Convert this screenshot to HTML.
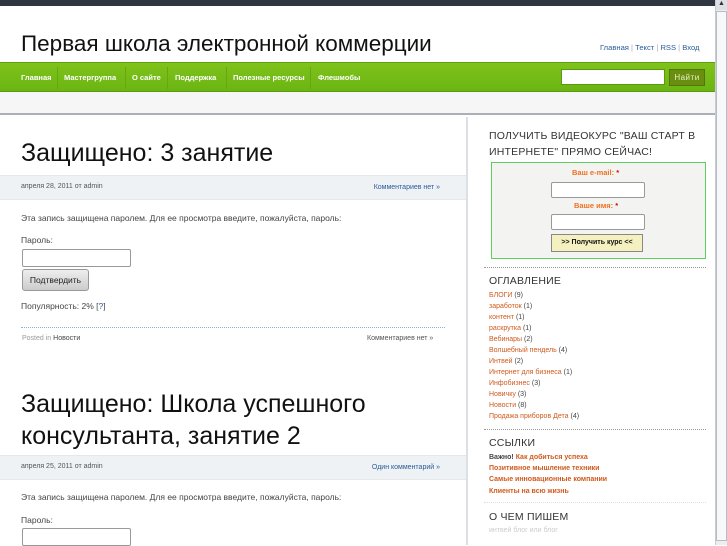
<!DOCTYPE html>
<html><head><meta charset="utf-8">
<style>
*{margin:0;padding:0;box-sizing:border-box}
body{width:727px;height:545px;overflow:hidden;background:#fff;font-family:"Liberation Sans","DejaVu Sans",sans-serif;position:relative}
.a{position:absolute}
.top{left:0;top:0;width:715px;height:6px;background:#2f3640}
.sb{left:715px;top:0;width:12px;height:545px;background:#eceef2;border-left:1px solid #c8ccd2}
.sbb{left:716px;top:0;width:11px;height:10px;background:#dde0e4;font-size:7px;text-align:center;color:#333}
.sbt{left:716px;top:11px;width:11px;height:530px;background:#f7f8fa;border:1px solid #b8bcc4}
h1.t{left:21px;top:31px;font-size:22.5px;font-weight:normal;color:#111;white-space:nowrap}
.tl{left:600px;top:43px;font-size:7.6px;color:#2a5c9a}
.tl span{color:#aaa}
.nav{left:0;top:62px;width:715px;height:30px;background:linear-gradient(#7fc21a,#6bb513);border-top:1px solid #5fa010;border-bottom:1px solid #5a9a10}
.nav a{position:absolute;top:10px;font-size:7.5px;font-weight:bold;color:#fff;text-decoration:none}
.navsep{position:absolute;top:4px;width:1px;height:22px;background:#6aa514}
.search{left:561px;top:69px;width:104px;height:16px;background:#fff;border:1px solid #5a9a10}
.btn{left:669px;top:69px;width:36px;height:17px;background:#6a8e10;border:1px solid #55750b;color:#e8f2c8;font-size:8px;text-align:center;line-height:15px;letter-spacing:.5px}
.strip{left:0;top:92px;width:715px;height:23px;background:#f6f6f6;border-bottom:2px solid #aab0b6}
.vdiv{left:466px;top:117px;width:2px;height:428px;background:#dcdfe3}
.h2{font-size:25px;color:#111;font-weight:normal;line-height:32px;white-space:nowrap}
.meta{left:0;width:466px;height:25px;background:#eef2f4;border-top:1px solid #e4e8ea;border-bottom:1px solid #e4e8ea;font-size:7px}
.meta .l{position:absolute;left:21px;top:7px;color:#555}
.meta .r{position:absolute;right:26px;top:8px;color:#2a5c9a}
.p{font-size:8.5px;color:#444}
.inp{width:109px;height:18px;border:1px solid #999;border-radius:2px;background:#fff}
.sub{width:67px;height:22px;border:1px solid #999;border-radius:3px;background:linear-gradient(#eee,#ccc);font-size:8.5px;color:#222;text-align:center;line-height:20px}
.dot{left:21px;width:424px;border-top:1px dotted #88b0d8}
.side h3{font-size:10.5px;font-weight:normal;color:#333;letter-spacing:.2px}
.sl{font-size:7px;color:#d05a1c;line-height:11px}
.sl span{color:#444}
.sdot{left:484px;width:222px;border-top:1px dotted #999}
</style></head><body>
<div class="a top"></div>
<div class="a sb"></div><div class="a sbb">▲</div><div class="a sbt"></div>
<h1 class="a t">Первая школа электронной коммерции</h1>
<div class="a tl">Главная <span>|</span> Текст <span>|</span> RSS <span>|</span> Вход</div>
<div class="a nav">
<a style="left:21px">Главная</a><div class="navsep" style="left:57px"></div>
<a style="left:64px">Мастергруппа</a><div class="navsep" style="left:125px"></div>
<a style="left:132px">О сайте</a><div class="navsep" style="left:167px"></div>
<a style="left:175px">Поддержка</a><div class="navsep" style="left:226px"></div>
<a style="left:233px">Полезные ресурсы</a><div class="navsep" style="left:310px"></div>
<a style="left:318px">Флешмобы</a>
</div>
<div class="a search"></div><div class="a btn">Найти</div>
<div class="a strip"></div>
<div class="a vdiv"></div>

<div class="a h2" style="left:21px;top:137px">Защищено: 3 занятие</div>
<div class="a meta" style="top:175px"><span class="l">апреля 28, 2011 от admin</span><span class="r">Комментариев нет »</span></div>
<div class="a p" style="left:21px;top:213px">Эта запись защищена паролем. Для ее просмотра введите, пожалуйста, пароль:</div>
<div class="a p" style="left:21px;top:235px">Пароль:</div>
<div class="a inp" style="left:22px;top:249px"></div>
<div class="a sub" style="left:22px;top:269px">Подтвердить</div>
<div class="a p" style="left:21px;top:301px">Популярность: 2% [<span style="color:#2a5c9a">?</span>]</div>
<div class="a dot" style="top:327px"></div>
<div class="a" style="left:22px;top:335px;font-size:7px;color:#999">Posted in <span style="color:#444">Новости</span></div>
<div class="a" style="left:367px;top:335px;font-size:7px;color:#555">Комментариев нет »</div>

<div class="a h2" style="left:21px;top:388px">Защищено: Школа успешного<br>консультанта, занятие 2</div>
<div class="a meta" style="top:455px"><span class="l">апреля 25, 2011 от admin</span><span class="r">Один комментарий »</span></div>
<div class="a p" style="left:21px;top:492px">Эта запись защищена паролем. Для ее просмотра введите, пожалуйста, пароль:</div>
<div class="a p" style="left:21px;top:515px">Пароль:</div>
<div class="a inp" style="left:22px;top:528px"></div>

<div class="side">
<h3 class="a" style="left:489px;top:128px;line-height:16px">ПОЛУЧИТЬ ВИДЕОКУРС "ВАШ СТАРТ В<br>ИНТЕРНЕТЕ" ПРЯМО СЕЙЧАС!</h3>
<div class="a" style="left:491px;top:162px;width:215px;height:97px;background:#f3f4f2;border:1px solid #5ccf5c"></div>
<div class="a" style="left:572px;top:168px;font-size:7.5px;font-weight:bold;color:#f07020">Ваш e-mail: <span style="color:#d00">*</span></div>
<div class="a inp" style="left:551px;top:182px;width:94px;height:16px"></div>
<div class="a" style="left:574px;top:201px;font-size:7.5px;font-weight:bold;color:#f07020">Ваше имя: <span style="color:#d00">*</span></div>
<div class="a inp" style="left:551px;top:214px;width:94px;height:16px"></div>
<div class="a" style="left:551px;top:234px;width:92px;height:18px;background:#f4f0c0;border:1px solid #888;font-size:7px;font-weight:bold;text-align:center;line-height:16px;color:#111">&gt;&gt; Получить курс &lt;&lt;</div>
<div class="a sdot" style="top:267px"></div>
<h3 class="a" style="left:489px;top:275px">ОГЛАВЛЕНИЕ</h3>
<div class="a sl" style="left:489px;top:290px">БЛОГИ <span>(9)</span><br>заработок <span>(1)</span><br>контент <span>(1)</span><br>раскрутка <span>(1)</span><br>Вебинары <span>(2)</span><br>Волшебный пендель <span>(4)</span><br>Интвей <span>(2)</span><br>Интернет для бизнеса <span>(1)</span><br>Инфобизнес <span>(3)</span><br>Новичку <span>(3)</span><br>Новости <span>(8)</span><br>Продажа приборов Дета <span>(4)</span></div>
<div class="a sdot" style="top:429px"></div>
<h3 class="a" style="left:489px;top:437px">ССЫЛКИ</h3>
<div class="a sl" style="left:489px;top:452px;font-weight:bold;line-height:11.2px"><span>Важно!</span> Как добиться успеха<br>Позитивное мышление техники<br>Самые инновационные компании<br>Клиенты на всю жизнь</div>
<div class="a sdot" style="top:502px;border-color:#ddd"></div>
<h3 class="a" style="left:489px;top:511px">О ЧЕМ ПИШЕМ</h3>
<div class="a" style="left:489px;top:527px;font-size:7px;color:#ccc">интвей блог или блог</div>
</div>
</body></html>
